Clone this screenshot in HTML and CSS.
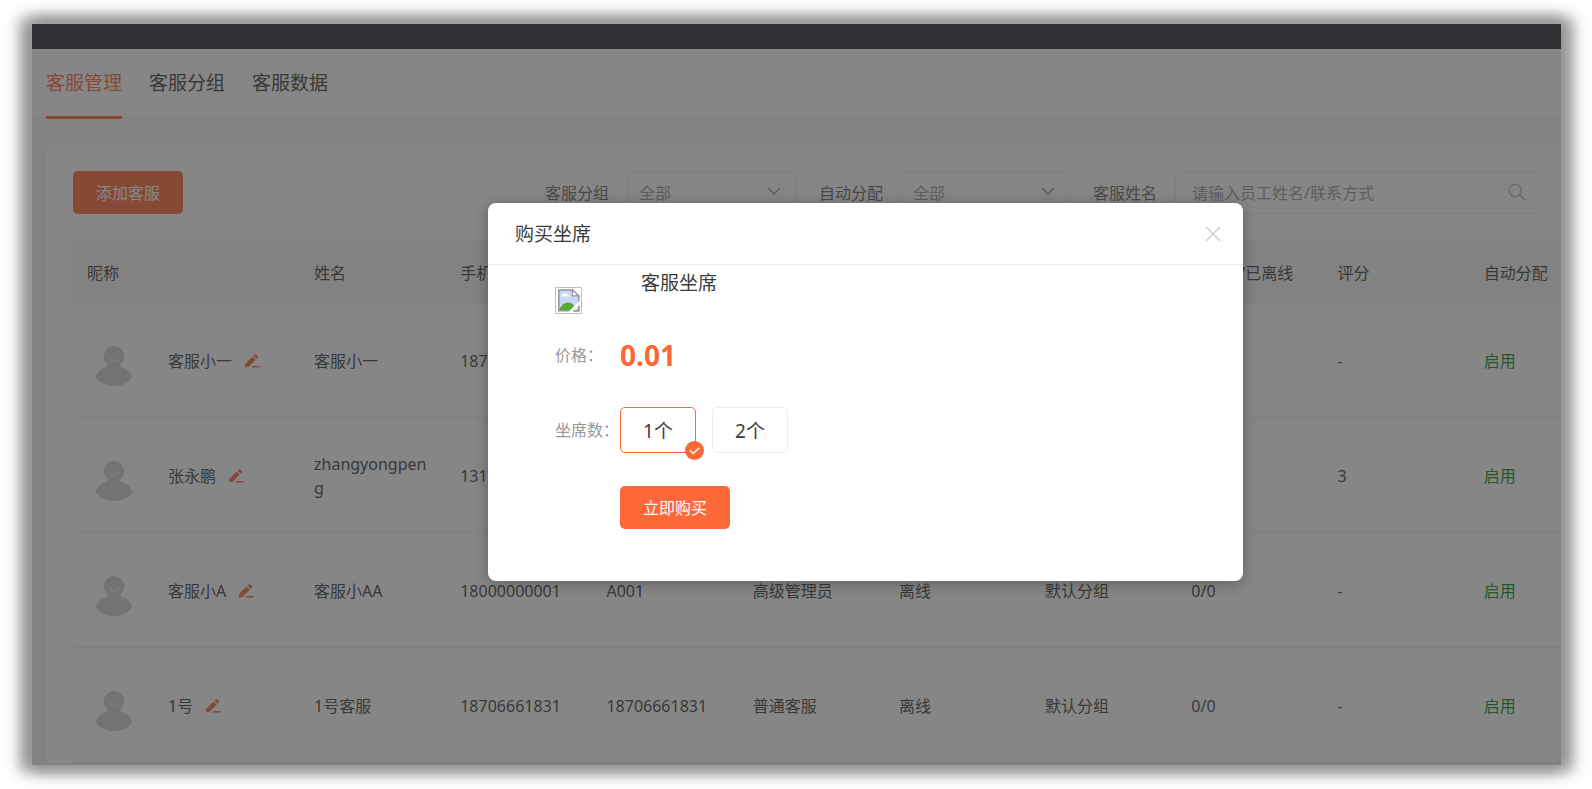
FILE: index.html
```html
<!DOCTYPE html>
<html lang="zh-CN">
<head>
  <meta charset="UTF-8" />
  <meta name="viewport" content="width=device-width, initial-scale=1.0"/>
  <title>客服管理</title>
  <link rel="stylesheet" href="styles.css">
</head>
<body>
  <!-- shared icons -->
  <svg class="sprite" aria-hidden="true">
    <symbol id="avatar" viewBox="0 0 54 54">
      <path fill="#d0d0d0" d="M27 12a10.3 10.3 0 0 1 10.3 10.3c0 2.600-1 4.700-2.600 6.500-1.800 2-2.200 3.200.3 4.200 5.800 2.200 9.200 5.600 10.300 10.200C41.500 48.800 35 52 27 52S12.500 48.800 8.700 43.200C9.800 38.600 13.200 35.200 19 33c2.500-1 2.100-2.200.3-4.200a9.500 9.500 0 0 1-2.600-6.500A10.300 10.300 0 0 1 27 12z"/>
      <path fill="none" stroke="#ececec" stroke-width="1.300" stroke-linecap="round" d="M22.700 23.500c.8 4.600 7.800 4.600 8.600 0"/>
    </symbol>
    <symbol id="edit" viewBox="0 0 15 14">
      <path fill="#fd6839" d="M0 13.300v-3.100L7.600 2.600l3.100 3.100-7.600 7.600zM8.500 1.700 9.800.4c.5-.5 1-.5 1.500 0l1.600 1.600c.5.5.5 1 0 1.500l-1.300 1.300zM7.500 12h7.300v1.400H6.100z"/>
    </symbol>
    <symbol id="arrow" viewBox="0 0 14 14">
      <path fill="none" stroke="#999" stroke-width="1.500" stroke-linecap="round" stroke-linejoin="round" d="M1.500 4.500 7 10l5.500-5.500"/>
    </symbol>
  </svg>

  <div class="screen">
    <div class="topbar"></div>

    <nav class="tabs">
      <a href="#" class="tab active">客服管理</a>
      <a href="#" class="tab">客服分组</a>
      <a href="#" class="tab">客服数据</a>
    </nav>

    <main class="card">
      <div class="toolbar">
        <button type="button" class="btn">添加客服</button>
        <form class="filters">
          <div class="filter">
            <label for="group">客服分组</label>
            <div class="field">
              <select id="group"><option>全部</option></select>
              <svg class="arrow"><use href="#arrow"/></svg>
            </div>
          </div>
          <div class="filter">
            <label for="assign">自动分配</label>
            <div class="field">
              <select id="assign"><option>全部</option></select>
              <svg class="arrow"><use href="#arrow"/></svg>
            </div>
          </div>
          <div class="filter">
            <label for="keyword">客服姓名</label>
            <div class="field search">
              <input type="text" id="keyword" placeholder="请输入员工姓名/联系方式">
              <svg class="search-icon" viewBox="0 0 18 18"><path fill="none" stroke="#bbb" stroke-width="1.500" stroke-linecap="round" d="M7.300 1.200a6.100 6.100 0 1 1 0 12.200 6.100 6.100 0 0 1 0-12.200zM11.800 11.800l4.900 5"/></svg>
            </div>
          </div>
        </form>
      </div>

      <table class="staff">
        <thead>
          <tr>
            <th class="nick-col">昵称</th>
            <th>姓名</th>
            <th>手机</th>
            <th></th>
            <th></th>
            <th></th>
            <th></th>
            <th>接待中/已离线</th>
            <th>评分</th>
            <th>自动分配</th>
          </tr>
        </thead>
        <tbody>
          <tr>
            <td><div class="nick"><svg class="avatar"><use href="#avatar"/></svg><span>客服小一</span><button type="button" class="edit" aria-label="编辑"><svg><use href="#edit"/></svg></button></div></td>
            <td>客服小一</td>
            <td>187</td>
            <td></td>
            <td></td>
            <td></td>
            <td></td>
            <td></td>
            <td>-</td>
            <td class="on">启用</td>
          </tr>
          <tr>
            <td><div class="nick"><svg class="avatar"><use href="#avatar"/></svg><span>张永鹏</span><button type="button" class="edit" aria-label="编辑"><svg><use href="#edit"/></svg></button></div></td>
            <td>zhangyongpeng</td>
            <td>131</td>
            <td></td>
            <td></td>
            <td></td>
            <td></td>
            <td></td>
            <td>3</td>
            <td class="on">启用</td>
          </tr>
          <tr>
            <td><div class="nick"><svg class="avatar"><use href="#avatar"/></svg><span>客服小A</span><button type="button" class="edit" aria-label="编辑"><svg><use href="#edit"/></svg></button></div></td>
            <td>客服小AA</td>
            <td>18000000001</td>
            <td>A001</td>
            <td>高级管理员</td>
            <td>离线</td>
            <td>默认分组</td>
            <td>0/0</td>
            <td>-</td>
            <td class="on">启用</td>
          </tr>
          <tr>
            <td><div class="nick"><svg class="avatar"><use href="#avatar"/></svg><span>1号</span><button type="button" class="edit" aria-label="编辑"><svg><use href="#edit"/></svg></button></div></td>
            <td>1号客服</td>
            <td>18706661831</td>
            <td>18706661831</td>
            <td>普通客服</td>
            <td>离线</td>
            <td>默认分组</td>
            <td>0/0</td>
            <td>-</td>
            <td class="on">启用</td>
          </tr>
        </tbody>
      </table>
    </main>

    <div class="mask">
      <div class="modal" role="dialog" aria-labelledby="modalTitle">
        <div class="modal-header">
          <h2 id="modalTitle">购买坐席</h2>
          <button type="button" class="close" aria-label="关闭">
            <svg viewBox="0 0 16 16"><path fill="none" stroke="#ccc" stroke-width="1.300" d="M1 1l14 14M15 1 1 15"/></svg>
          </button>
        </div>
        <form class="modal-body">
          <div class="product">
            <!-- missing picture placeholder -->
            <svg class="thumb" viewBox="0 0 27 27">
              <path fill="#fff" stroke="#c0c0c0" d="M.5.500h26v26H.5z"/>
              <path fill="#c8d8f6" d="M4 3h13.500l6 5.500V24H4z"/>
              <path fill="#fff" d="M6 9.500c0-1.500 1-2 2-2 .6-1.800 3.400-1.800 4 0 1.400 0 2 .8 2 2z"/>
              <path fill="#57ab33" d="M4 24c1.200-5 5-8.500 9-8.500 2.700 0 4.800 1.200 6 3L16 24z"/>
              <path fill="none" stroke="#969696" stroke-width="1.500" d="M17.500 3H3.800v20.800h20V8.800z"/>
              <path fill="#fff" stroke="#969696" stroke-width="1.200" d="M17.500 3v5.800h6z"/>
              <path fill="#fff" d="M25.500 13v4L18.400 25h-5.200z"/>
              <path fill="none" stroke="#969696" stroke-width="1.500" d="M18.500 23.800h5.300v-4.500"/>
            </svg>
            <h3>客服坐席</h3>
          </div>
          <div class="row price-row">
            <span class="label">价格：</span>
            <strong class="price">0.01</strong>
          </div>
          <div class="row">
            <span class="label">坐席数：</span>
            <div class="seats">
              <label class="seat"><input type="radio" name="seat" checked>1个<svg class="tick" viewBox="0 0 19 19"><circle cx="9.500" cy="9.500" r="9.500" fill="#fd6839"/><path fill="none" stroke="#fff" stroke-width="1.300" d="M5 9.300l3.200 3.200 6-5.600"/></svg></label>
              <label class="seat"><input type="radio" name="seat">2个<svg class="tick" viewBox="0 0 19 19"><circle cx="9.500" cy="9.500" r="9.500" fill="#fd6839"/><path fill="none" stroke="#fff" stroke-width="1.300" d="M5 9.300l3.200 3.200 6-5.600"/></svg></label>
            </div>
          </div>
          <div class="row buy-row">
            <span></span>
            <button type="button" class="btn">立即购买</button>
          </div>
        </form>
      </div>
    </div>
  </div>
</body>
</html>
```
FILE: styles.css
```css
* {
  margin: 0;
  padding: 0;
  box-sizing: border-box;
}

body {
  font-family: "Noto Sans", "Noto Sans CJK SC", sans-serif;
  font-size: 16px;
  line-height: 24px;
  color: #3c3c3c;
  background: #fff;
  padding: 24px 31px 24px 32px;
}

button, input, select {
  font: inherit;
}

button {
  border: none;
  cursor: pointer;
}

.sprite {
  display: none;
}

.screen {
  position: relative;
  height: calc(100vh - 48px);
  background: #f5f5f5;
  overflow: hidden;
  box-shadow: -6px 0 14px 6px #969696, 6px 0 14px 6px #969696;
}

.topbar {
  height: 25px;
  background: #25272e;
}

.tabs {
  display: flex;
  gap: 27px;
  height: 68px;
  padding-left: 14px;
  background: #fff;
}

.tab {
  height: 70px;
  font-size: 19px;
  line-height: 68px;
  color: #3c3c3c;
  text-decoration: none;
}

.tab.active {
  color: #fd6839;
  border-bottom: 3px solid #fd6839;
}

.card {
  margin: 27px 0 0 14px;
  padding: 27px 0 0 27px;
  background: #fff;
  border-radius: 6px 0 0 0;
}

.toolbar {
  display: flex;
  justify-content: space-between;
  align-items: center;
  margin: 0 22px 27px 0;
}

.btn {
  width: 110px;
  height: 43px;
  color: #fff;
  background: #fd6839;
  border-radius: 5px;
}

.filters {
  display: flex;
  gap: 23px;
}

.filter {
  display: flex;
  align-items: center;
  gap: 18px;
  color: #666;
}

.field {
  position: relative;
  width: 169px;
}

.field.search {
  width: 364px;
}

.field select,
.field input {
  display: block;
  width: 100%;
  height: 43px;
  padding: 0 11px;
  color: #999;
  background: #fff;
  border: 1px solid #eee;
  border-radius: 5px;
  appearance: none;
}

.field input {
  padding: 0 44px 0 16px;
}

.field input::placeholder {
  color: #999;
}

.arrow {
  position: absolute;
  top: 13px;
  right: 15px;
  width: 14px;
  height: 14px;
}

.search-icon {
  position: absolute;
  top: 12px;
  right: 13px;
  width: 18px;
  height: 18px;
}

.staff {
  width: 100%;
  min-width: 1543px;
  table-layout: fixed;
  border-collapse: separate;
  border-spacing: 0;
}

.staff th {
  height: 62px;
  padding: 2px 14px 0;
  font-weight: 400;
  text-align: left;
  background: #f5f5f5;
}

.staff .nick-col {
  width: 227px;
}

.staff td {
  height: 115px;
  padding: 1px 14px 0;
  word-break: break-all;
  border-bottom: 1px solid #eee;
}

.staff .on {
  color: #0a8a1a;
}

.nick {
  display: flex;
  align-items: center;
}

.avatar {
  width: 54px;
  height: 54px;
  margin-right: 27px;
}

.edit {
  width: 15px;
  height: 14px;
  margin-left: 13px;
  background: none;
}

.edit svg {
  display: block;
  width: 15px;
  height: 14px;
}

.mask {
  position: absolute;
  inset: 0;
  display: flex;
  justify-content: center;
  align-items: flex-start;
  padding: 179px 0 0 138px;
  background: rgba(54, 54, 54, 0.6);
}

.modal {
  width: 100%;
  max-width: 755px;
  background: #fff;
  border-radius: 8px;
  box-shadow: 0 2px 14px rgba(0, 0, 0, 0.3);
}

.modal-header {
  display: flex;
  justify-content: space-between;
  align-items: center;
  height: 62px;
  padding: 0 22px 0 27px;
  border-bottom: 1px solid #eee;
}

.modal-header h2,
.product h3 {
  font-size: 19px;
  font-weight: 400;
}

.close {
  width: 16px;
  height: 16px;
  background: none;
}

.close svg {
  display: block;
}

.modal-body {
  padding: 0 67px 52px;
}

.product {
  display: flex;
  align-items: flex-start;
  gap: 59px;
}

.thumb {
  width: 27px;
  height: 27px;
  margin-top: 22px;
}

.product h3 {
  line-height: 37px;
}

.row {
  display: grid;
  grid-template-columns: 65px 1fr;
  align-items: center;
  margin-top: 33px;
}

.row.price-row {
  margin-top: 22px;
}

.label {
  color: #999;
  white-space: nowrap;
}

.price {
  font-size: 28px;
  line-height: 38px;
  color: #fd6839;
}

.seats {
  display: flex;
  gap: 16px;
}

.seat {
  position: relative;
  width: 76px;
  height: 46px;
  font-size: 19px;
  line-height: 46px;
  text-align: center;
  border: 1px solid #eee;
  border-radius: 5px;
  cursor: pointer;
}

.seat input {
  position: absolute;
  opacity: 0;
}

.seat .tick {
  display: none;
  position: absolute;
  right: -9px;
  bottom: -8px;
  width: 19px;
  height: 19px;
}

.seat:has(input:checked) {
  border-color: #fd6839;
}

.seat:has(input:checked) .tick {
  display: block;
}
```
